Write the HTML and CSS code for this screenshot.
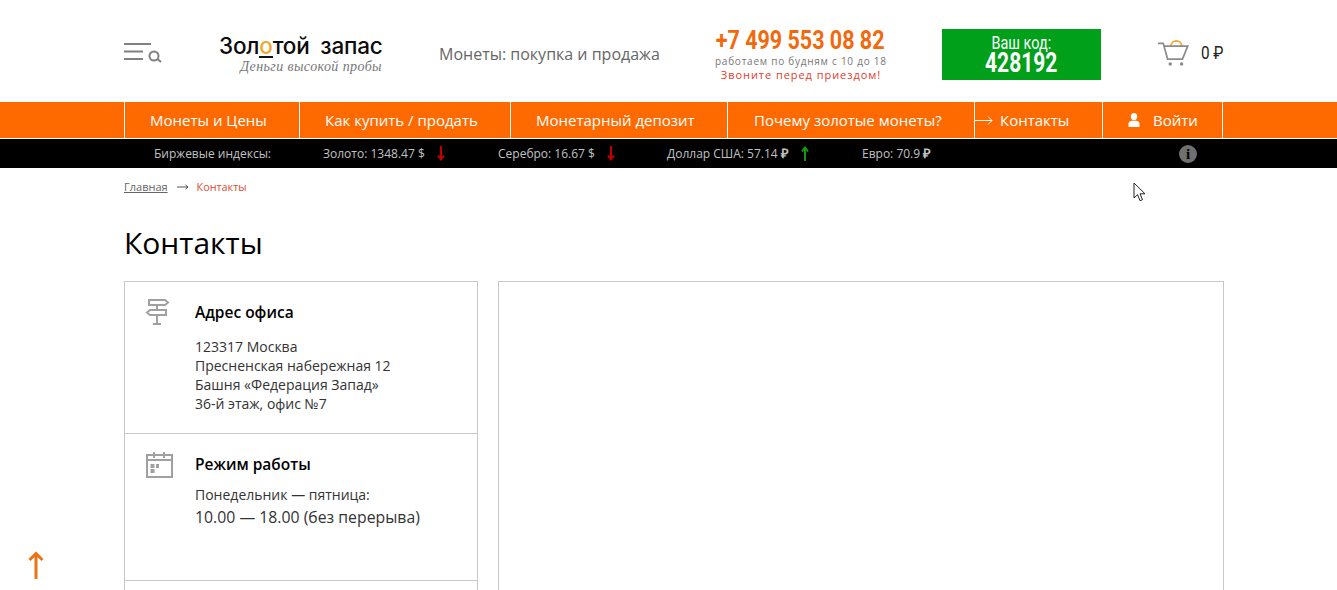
FILE: index.html
```html
<!DOCTYPE html>
<html lang="ru">

<head>
    <meta charset="UTF-8">
    <title>Контакты</title>
    <link rel="stylesheet" href="styles.css">
</head>

<body>
    <header class="header">
        <div class="menu-icon">
            <svg width="38" height="20" viewBox="0 0 38 20" fill="none" stroke="#808080" stroke-width="2">
                <path d="M0 1h27M0 8.500h19M0 16h19"/>
                <circle cx="30" cy="13" r="4.500"/>
                <path d="M33.500 16l3.500 3"/>
            </svg>
        </div>
        <div class="logo">
            <div class="logo-name">Зол<span class="logo-o">о</span>той запас</div>
            <div class="logo-slogan">Деньги высокой пробы</div>
        </div>
        <div class="tagline">Монеты: покупка и продажа</div>
        <div class="phone-block">
            <div class="phone"><span>+7 499 553 08 82</span></div>
            <div class="phone-hours">работаем по будням с 10 до 18</div>
            <div class="phone-note">Звоните перед приездом!</div>
        </div>
        <div class="code-box">
            <div class="code-label"><span>Ваш код:</span></div>
            <div class="code-value"><span>428192</span></div>
        </div>
        <div class="cart">
            <svg width="36" height="30" viewBox="0 0 36 30" fill="none">
                <path d="M15 7c0-8 12-8 12 0" stroke="#f0a830" stroke-width="2"/>
                <path d="M0 4h6l5 18h17l6-15H7" stroke="#8c8c8c" stroke-width="2"/>
                <circle cx="14" cy="27.500" r="2" fill="#8c8c8c"/>
                <circle cx="27" cy="27.500" r="2" fill="#8c8c8c"/>
            </svg>
            <span class="cart-sum"><span>0 ₽</span></span>
        </div>
    </header>

    <nav class="nav">
        <div class="nav-inner">
            <a class="nav-item w1">Монеты и Цены</a>
            <a class="nav-item w2">Как купить / продать</a>
            <a class="nav-item w3">Монетарный депозит</a>
            <a class="nav-item w4">Почему золотые монеты?</a>
            <a class="nav-item w5">
                <svg class="nav-arrow" width="18" height="9" viewBox="0 0 18 9" fill="none" stroke="#fff" stroke-width="1">
                    <path d="M0 4.500h17M13 .5l4 4-4 4"/>
                </svg>
                <span>Контакты</span>
            </a>
            <a class="nav-item w6">
                <svg class="nav-user" width="12" height="14" viewBox="0 0 12 14" fill="#fff">
                    <ellipse cx="6" cy="3.600" rx="3.200" ry="3.600"/>
                    <path d="M0.500 14v-3.500c0-1.800 1.800-2.500 3.500-2.800h4c1.700.3 3.500 1 3.500 2.800V14z"/>
                </svg>
                <span>Войти</span>
            </a>
        </div>
    </nav>

    <div class="ticker">
        <div class="ticker-inner">
            <span class="t-title">Биржевые индексы:</span>
            <span class="t-gold">Золото: 1348.47 $</span>
            <span class="t-arrow a1"><svg width="8" height="15" viewBox="0 0 8 15" fill="none" stroke="#c00000" stroke-width="2"><path d="M4 0v13M1 9.500l3 4 3-4"/></svg></span>
            <span class="t-silver">Серебро: 16.67 $</span>
            <span class="t-arrow a2"><svg width="8" height="15" viewBox="0 0 8 15" fill="none" stroke="#c00000" stroke-width="2"><path d="M4 0v13M1 9.500l3 4 3-4"/></svg></span>
            <span class="t-usd">Доллар США: 57.14 <b>₽</b></span>
            <span class="t-arrow a3"><svg width="8" height="15" viewBox="0 0 8 15" fill="none" stroke="#0f9a0f" stroke-width="2"><path d="M4 15V2M1 5.500l3-4 3 4"/></svg></span>
            <span class="t-eur">Евро: 70.9 <b>₽</b></span>
            <span class="t-info">i</span>
        </div>
    </div>

    <main class="page">
        <div class="crumbs">
            <a class="crumb-link">Главная</a>
            <svg class="crumb-arrow" width="12" height="6" viewBox="0 0 12 6" fill="none" stroke="#555" stroke-width="1"><path d="M0 3h11M8.500 .8L11 3 8.500 5.200"/></svg>
            <span class="crumb-current">Контакты</span>
        </div>

        <h1 class="title">Контакты</h1>

        <div class="contacts">
            <div class="info-card">
                <section class="info-row row-address">
                    <svg class="info-icon" width="25" height="28" viewBox="0 0 25 28" fill="none" stroke="#a0a0a0" stroke-width="2">
                        <path d="M4 2h16l3 2.500-3 2.500H4zM21 12H5l-3 2.500L5 17h16zM12 7v5M12 17v9M8 26h8"/>
                    </svg>
                    <div class="info-body">
                        <h3 class="info-title">Адрес офиса</h3>
                        <p class="info-text">123317 Москва<br>Пресненская набережная 12<br>Башня «Федерация Запад»<br>36-й этаж, офис №7</p>
                    </div>
                </section>
                <section class="info-row row-hours">
                    <svg class="info-icon" width="29" height="28" viewBox="0 0 29 28" fill="none" stroke="#a0a0a0" stroke-width="2">
                        <path d="M2 4h25v22H2zM2 9h25M9 1v6M19 1v6"/>
                        <path d="M5.500 13h4v4h-4zM11 13h3v4h-3zM5.500 18h4v4h-4z" fill="#a0a0a0" stroke="none"/>
                    </svg>
                    <div class="info-body">
                        <h3 class="info-title">Режим работы</h3>
                        <p class="info-text hours-days">Понедельник — пятница:</p>
                        <p class="hours-time">10.00 — 18.00 (без перерыва)</p>
                    </div>
                </section>
                <section class="info-row row-empty"></section>
            </div>
            <div class="map-card"></div>
        </div>
    </main>

    <svg class="to-top" width="16" height="28" viewBox="0 0 16 28" fill="none" stroke="#ea7415" stroke-width="3">
        <path d="M8 28V2.500M1.500 9L8 2.500 14.500 9"/>
    </svg>

    <svg class="cursor" width="13" height="20" viewBox="0 0 13 20">
        <path d="M1 1v15l3.500-3.300 2.500 6 2.500-1-2.500-5.900h5z" fill="#fff" stroke="#222" stroke-width="1"/>
    </svg>
</body>

</html>
```

FILE: styles.css
```css
html, body {
    margin: 0;
    height: 100%;
    overflow: hidden;
}

body {
    background: #fff;
    color: #000;
    font-family: "Open Sans", sans-serif;
}

h1, h3, p {
    margin: 0;
}

.header {
    width: 1100px;
    height: 102px;
    box-sizing: border-box;
    padding-top: 6px;
    margin-left: 124px;
    display: flex;
    align-items: center;
}

.menu-icon {
    width: 95px;
    display: flex;
    margin-top: -2px;
}

.logo {
    width: 163px;
    text-align: right;
    margin-top: -1px;
}

.logo-name {
    font-family: "Inter", sans-serif;
    font-weight: 500;
    font-size: 22.500px;
    line-height: 26px;
    letter-spacing: -.2px;
    word-spacing: 5px;
    white-space: nowrap;
    color: #0b0b0b;
}

.logo-o {
    display: inline-block;
    line-height: 20px;
    color: #f0a830;
    border-bottom: 2px solid #111;
}

.logo-slogan {
    font-family: "Liberation Serif", serif;
    font-style: italic;
    font-size: 14px;
    line-height: 16px;
    letter-spacing: .4px;
    color: #777;
    white-space: nowrap;
}

.tagline {
    margin-left: 57px;
    width: 276px;
    font-size: 16px;
    color: #666;
    white-space: nowrap;
}

.phone-block {
    width: 170px;
    text-align: center;
    margin-top: 2px;
}

.phone,
.code-label,
.code-value {
    display: flex;
    justify-content: center;
}

.phone {
    font-family: "Roboto", sans-serif;
    font-weight: 700;
    font-size: 25px;
    line-height: 26px;
    color: #f2690d;
    white-space: nowrap;
}

.phone span,
.code-label span,
.code-value span,
.cart-sum span {
    display: inline-block;
    flex: none;
}

.phone span {
    transform: scaleX(.86);
}

.phone-hours {
    font-size: 10px;
    line-height: 14px;
    letter-spacing: .75px;
    color: #777;
    white-space: nowrap;
}

.phone-note {
    font-size: 11px;
    line-height: 14px;
    letter-spacing: .95px;
    padding-left: 2px;
    color: #e23c2a;
    white-space: nowrap;
}

.code-box {
    width: 159px;
    height: 51px;
    box-sizing: border-box;
    padding-top: 4px;
    margin-left: 57px;
    background: #00a01a;
    color: #fff;
    text-align: center;
}

.code-label {
    font-family: "Roboto", sans-serif;
    font-size: 19px;
    line-height: 20px;
    white-space: nowrap;
}

.code-label span {
    transform: scaleX(.76);
}

.code-value {
    font-family: "Roboto", sans-serif;
    font-weight: 700;
    font-size: 28px;
    line-height: 20px;
}

.code-value span {
    transform: scaleX(.75);
}

.cart {
    margin-left: 57px;
    margin-top: -2px;
    width: 66px;
    display: flex;
    align-items: center;
}

.cart-sum {
    margin-left: 8px;
    padding-bottom: 2px;
    font-family: "Roboto", sans-serif;
    font-size: 18px;
    color: #222;
    white-space: nowrap;
}

.cart-sum span {
    transform: scaleX(.85);
    transform-origin: right center;
}

.nav {
    background: #ff6a00;
    height: 36px;
    border-bottom: 1px solid #fff;
}

.nav-inner {
    width: 1098px;
    margin-left: 124px;
    display: flex;
    height: 100%;
    border-right: 1px solid #fff;
}

.nav-item {
    box-sizing: border-box;
    border-left: 1px solid #fff;
    color: #fff;
    font-size: 15px;
    line-height: 37px;
    white-space: nowrap;
    display: flex;
    align-items: center;
    padding-left: 25px;
}

.w1 { width: 175px; }
.w2 { width: 211px; }
.w3 { width: 217px; }
.w4 { width: 247px; padding-left: 26px; }
.w5 { width: 128px; padding-left: 0; }
.w6 { width: 120px; }

.nav-arrow {
    margin-right: 7px;
}

.nav-user {
    margin-right: 13px;
}

.ticker {
    background: #000;
    height: 29px;
}

.ticker-inner {
    width: 1100px;
    margin-left: 124px;
    height: 100%;
    display: flex;
    align-items: center;
    color: #c2c2c2;
    font-size: 12px;
    white-space: nowrap;
}

.ticker-inner b {
    font-weight: 700;
    font-size: 13px;
    line-height: 16px;
}

.t-title { margin-left: 30px; width: 169px; }
.t-gold { width: 114px; }
.t-arrow { width: 8px; display: flex; }
.a1 { margin-right: 53px; }
.t-silver { width: 109px; }
.a2 { margin-right: 52px; }
.t-usd { width: 134px; }
.a3 { margin-right: 53px; }
.t-eur { width: 317px; }

.t-info {
    width: 18px;
    height: 18px;
    border-radius: 50%;
    background: #707070;
    color: #000;
    font-family: "Liberation Serif", serif;
    font-weight: 700;
    font-size: 15px;
    line-height: 18px;
    text-align: center;
}

.page {
    width: 1100px;
    margin-left: 124px;
}

.crumbs {
    display: flex;
    align-items: center;
    height: 36px;
    font-size: 11px;
}

.crumb-link {
    color: #666;
    text-decoration: underline;
}

.crumb-arrow {
    margin: 1px 8px 0 9px;
}

.crumb-current {
    color: #e04a2c;
    font-size: 10.800px;
}

.title {
    font-weight: 400;
    font-size: 30px;
    line-height: 40px;
    margin-top: 19px;
    margin-bottom: 18px;
}

.contacts {
    display: flex;
    gap: 20px;
}

.info-card {
    width: 354px;
    box-sizing: border-box;
    border: 1px solid #c8c8c8;
    height: 400px;
}

.info-row {
    display: flex;
    border-bottom: 1px solid #c8c8c8;
    box-sizing: border-box;
    padding-left: 20px;
}

.row-address {
    height: 152px;
    padding-top: 16px;
}

.row-hours {
    height: 147px;
    padding-top: 17px;
}

.row-empty {
    height: 99px;
    border-bottom: 0;
}

.info-icon {
    flex: none;
}

.info-body {
    margin-left: 25px;
}

.row-address .info-body {
    padding-top: 4px;
}

.row-hours .info-body {
    margin-left: 21px;
    padding-top: 3px;
}

.info-title {
    font-size: 15.500px;
    font-weight: 600;
    line-height: 20px;
}

.info-text {
    font-size: 14px;
    line-height: 19px;
    color: #333;
}

.row-address .info-text {
    margin-top: 15px;
}

.hours-days {
    margin-top: 11px;
    margin-bottom: 1px;
}

.hours-time {
    font-size: 15.800px;
    line-height: 24px;
    color: #333;
}

.map-card {
    width: 726px;
    height: 400px;
    box-sizing: border-box;
    border: 1px solid #c8c8c8;
}

.to-top {
    position: fixed;
    left: 28px;
    bottom: 11px;
}

.cursor {
    position: fixed;
    left: 1133px;
    top: 182px;
}
```
